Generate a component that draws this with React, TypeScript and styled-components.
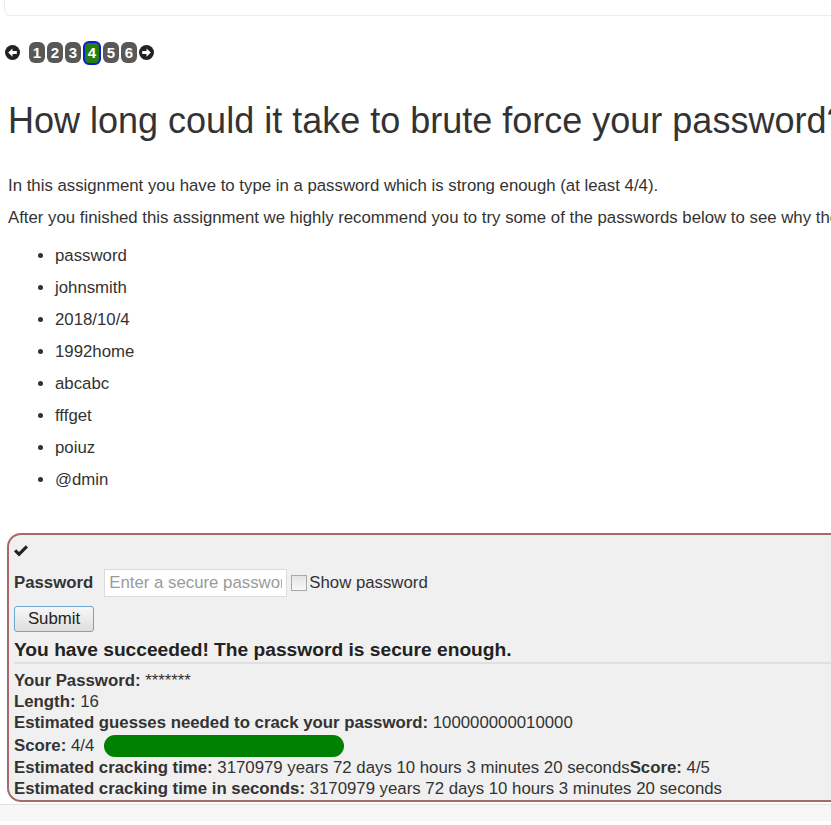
import React from 'react'
import styled, { createGlobalStyle } from 'styled-components'

const GlobalStyle = createGlobalStyle`
	html, body {
		margin: 0;
		padding: 0;
		background: #ffffff;
		overflow: hidden;
	}
	body {
		font-family: 'Liberation Sans', Arial, Helvetica, sans-serif;
		font-size: 16.8px;
		line-height: 24px;
		color: #333333;
	}
`

const Page = styled.div`
	width: 1200px;
	padding: 0 0 0 8px;
	box-sizing: border-box;
`

const TopCard = styled.div`
	box-sizing: border-box;
	height: 25px;
	margin: -9px 0 0 -4px;
	border: 1px solid #ececec;
	border-radius: 6px;
	background: #ffffff;
`

const Pager = styled.div`
	display: flex;
	align-items: center;
	height: 23px;
	margin-top: 25px;
	margin-left: -3px;
`

const PageLinks = styled.div`
	display: flex;
	align-items: center;
	gap: 2px;
	margin: 0 2px 0 9px;
`

const PageLink = styled.span<{ current?: boolean }>`
	box-sizing: border-box;
	display: flex;
	align-items: center;
	justify-content: center;
	width: ${({ current }) => (current ? '18px' : '16px')};
	height: ${({ current }) => (current ? '24px' : '21px')};
	border-radius: 6px;
	background: ${({ current }) => (current ? '#277d0e' : '#585858')};
	border: ${({ current }) => (current ? '2px solid #0a1ed6' : 'none')};
	color: #ffffff;
	font-weight: bold;
	font-size: 15px;
	line-height: 1;
`

const ArrowIcon = styled.svg`
	display: block;
	width: 15px;
	height: 15px;
	flex: none;
`

const Heading = styled.h2`
	margin: 37px 0 33px 0;
	font-size: 36px;
	font-weight: normal;
	line-height: 1.1;
	white-space: nowrap;
	color: #333333;
`

const Para = styled.p`
	margin: 0 0 8px 0;
	white-space: nowrap;
`

const List = styled.ul`
	margin: 14px 0 41px 0;
	padding-left: 47px;

	li + li {
		margin-top: 8px;
	}
`

const AttackContainer = styled.div`
	margin-left: -1px;
	padding: 4px 5px 0 5px;
	border: 2px solid #a66a6a;
	border-radius: 14px;
	background: #f0f0f0;
`

const CheckRow = styled.div`
	display: flex;
	align-items: center;
	height: 24px;
`

const CheckIcon = styled.svg`
	display: block;
	width: 14px;
	height: 12px;
`

const FormRow = styled.div`
	display: flex;
	align-items: center;
	height: 30px;
	margin-top: 5px;
`

const Label = styled.label`
	font-weight: bold;
	margin-right: 11px;
`

const TextInput = styled.input`
	box-sizing: border-box;
	width: 183px;
	height: 28px;
	padding: 0 4px;
	border: 1px solid #dcdcdc;
	background: #ffffff;
	font-family: inherit;
	font-size: 16.8px;
	color: #333333;
	outline: none;

	&::placeholder {
		color: #9a9a9a;
	}
`

const FakeCheckbox = styled.span`
	box-sizing: border-box;
	display: block;
	width: 16px;
	height: 16px;
	margin: 0 2px 0 4px;
	border: 1px solid #a8a8a8;
	background: linear-gradient(#e4e4e4, #f8f8f8);
`

const SubmitButton = styled.button`
	box-sizing: border-box;
	display: block;
	width: 80px;
	height: 26px;
	margin-top: 8px;
	padding: 0;
	border: 1px solid #6ea5d2;
	border-radius: 3px;
	background: linear-gradient(#f7f7f7, #dedede);
	font-family: inherit;
	font-size: 16.8px;
	color: #222222;
`

const Feedback = styled.div`
	margin-top: 7px;
	padding-bottom: 1px;
	border-bottom: 2px solid #e0e0e0;
	font-size: 19.2px;
	font-weight: bold;
	line-height: 22px;
	white-space: nowrap;
	color: #222222;
`

const Output = styled.div`
	padding-top: 7px;
`

const OutputRow = styled.div<{ tall?: boolean }>`
	display: flex;
	align-items: center;
	height: ${({ tall }) => (tall ? '24px' : '21px')};
	white-space: nowrap;
`

const ScoreBar = styled.div`
	height: 22px;
	margin-left: 10px;
	border-radius: 11px;
	background: #008000;
`

const BottomPanel = styled.div`
	height: 16px;
	margin: 2px 0 0 -8px;
	border-top: 1px solid #e3e3e3;
	background: #f7f7f7;
`

const LeftArrow = () => (
	<ArrowIcon viewBox="0 0 16 16">
		<circle cx="8" cy="8" r="8" fill="#222" />
		<path d="M3.4 8 L8 3.6 V6.4 H12.6 V9.6 H8 V12.4 Z" fill="#fff" />
	</ArrowIcon>
)

const RightArrow = () => (
	<ArrowIcon viewBox="0 0 16 16">
		<circle cx="8" cy="8" r="8" fill="#222" />
		<path d="M12.6 8 L8 3.6 V6.4 H3.4 V9.6 H8 V12.4 Z" fill="#fff" />
	</ArrowIcon>
)

const passwords = ['password', 'johnsmith', '2018/10/4', '1992home', 'abcabc', 'fffget', 'poiuz', '@dmin']

export default function App() {
	const score = 4
	return (
		<>
			<GlobalStyle />
			<Page>
				<TopCard />
				<Pager>
					<LeftArrow />
					<PageLinks>
						{[1, 2, 3, 4, 5, 6].map((n) => (
							<PageLink key={n} current={n === 4}>
								{n}
							</PageLink>
						))}
					</PageLinks>
					<RightArrow />
				</Pager>
				<Heading>How long could it take to brute force your password?</Heading>
				<Para>In this assignment you have to type in a password which is strong enough (at least 4/4).</Para>
				<Para>
					After you finished this assignment we highly recommend you to try some of the passwords below to see why they are
					not a good choice.
				</Para>
				<List>
					{passwords.map((p) => (
						<li key={p}>{p}</li>
					))}
				</List>
				<AttackContainer>
					<CheckRow>
						<CheckIcon viewBox="0 0 14 12">
							<path d="M0 6.4 L2.2 4.2 L5 7 L11.8 0.2 L14 2.4 L5 11.4 Z" fill="#222" />
						</CheckIcon>
					</CheckRow>
					<FormRow>
						<Label>Password</Label>
						<TextInput type="password" placeholder="Enter a secure password" />
						<FakeCheckbox />
						<span>Show password</span>
					</FormRow>
					<SubmitButton>Submit</SubmitButton>
					<Feedback>You have succeeded! The password is secure enough.</Feedback>
					<Output>
						<OutputRow>
							<b>Your Password:</b>&nbsp;*******
						</OutputRow>
						<OutputRow>
							<b>Length:</b>&nbsp;16
						</OutputRow>
						<OutputRow>
							<b>Estimated guesses needed to crack your password:</b>&nbsp;100000000010000
						</OutputRow>
						<OutputRow tall>
							<b>Score:</b>&nbsp;4/4
							<ScoreBar style={{ width: `${(score / 4) * 240}px` }} />
						</OutputRow>
						<OutputRow>
							<b>Estimated cracking time:</b>&nbsp;3170979 years 72 days 10 hours 3 minutes 20 seconds<b>Score:</b>&nbsp;4/5
						</OutputRow>
						<OutputRow>
							<b>Estimated cracking time in seconds:</b>&nbsp;3170979 years 72 days 10 hours 3 minutes 20 seconds
						</OutputRow>
					</Output>
				</AttackContainer>
				<BottomPanel />
			</Page>
		</>
	)
}
